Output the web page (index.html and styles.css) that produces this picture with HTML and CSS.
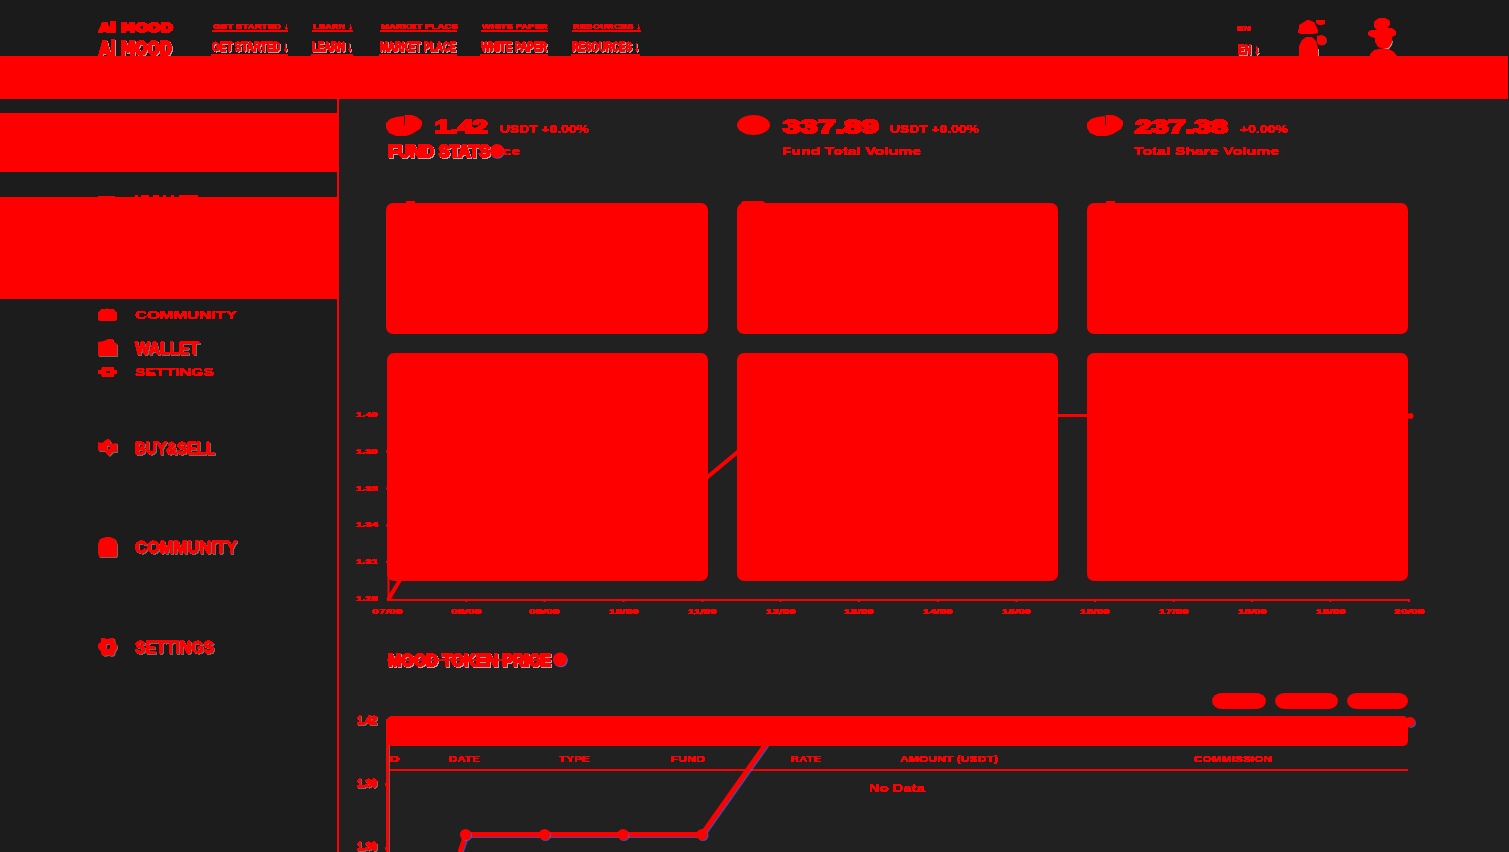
FILE: index.html
```html
<!DOCTYPE html>
<html lang="en">
<head>
<meta charset="utf-8">
<title>Ai MOOD</title>
<link rel="stylesheet" href="styles.css">
</head>
<body>
<svg class="defs" width="0" height="0"><filter id="hard" x="-5%" y="-20%" width="110%" height="140%"><feComponentTransfer><feFuncA type="discrete" tableValues="0 0 1 1 1 1"/></feComponentTransfer></filter></svg>
<div class="page">
  <header class="header">
    <div class="nav nav-small">
      <svg class="logo" width="76" height="12"><text class="brand" x="1" y="11" font-size="12" textLength="74" lengthAdjust="spacingAndGlyphs">Ai MOOD</text></svg>
      <svg class="link" width="76" height="10"><text x="1" y="9" font-size="7.500" textLength="76" lengthAdjust="spacingAndGlyphs">GET STARTED ↓</text></svg>
      <svg class="link" width="41" height="10"><text x="1" y="9" font-size="7.500" textLength="40" lengthAdjust="spacingAndGlyphs">LEARN ↓</text></svg>
      <svg class="link" width="77" height="10"><text x="1" y="9" font-size="7.500" textLength="77" lengthAdjust="spacingAndGlyphs">MARKET PLACE</text></svg>
      <svg class="link" width="67" height="10"><text x="1" y="9" font-size="7.500" textLength="66" lengthAdjust="spacingAndGlyphs">WHITE PAPER</text></svg>
      <svg class="link" width="69" height="10"><text x="1" y="9" font-size="7.500" textLength="68" lengthAdjust="spacingAndGlyphs">RESOURCES ↓</text></svg>
      <svg class="lang" width="24" height="12"><text x="0" y="11" font-size="6.500" textLength="14" lengthAdjust="spacingAndGlyphs">EN</text></svg>
    </div>
    <div class="nav nav-large">
      <svg class="logo lit" width="76" height="18"><text class="brand" x="1" y="17" font-size="19" textLength="73" lengthAdjust="spacingAndGlyphs">Ai MOOD</text></svg>
      <svg class="link" width="77" height="15"><g class="lit"><text class="bold" x="1" y="12" font-size="12.500" textLength="76" lengthAdjust="spacingAndGlyphs">GET STARTED ↓</text></g></svg>
      <svg class="link" width="42" height="15"><g class="lit"><text class="bold" x="1" y="12" font-size="12.500" textLength="40" lengthAdjust="spacingAndGlyphs">LEARN ↓</text></g></svg>
      <svg class="link" width="78" height="15"><g class="lit"><text class="bold" x="1" y="12" font-size="12.500" textLength="76" lengthAdjust="spacingAndGlyphs">MARKET PLACE</text></g></svg>
      <svg class="link" width="68" height="15"><g class="lit"><text class="bold" x="1" y="12" font-size="12.500" textLength="66" lengthAdjust="spacingAndGlyphs">WHITE PAPER</text></g></svg>
      <svg class="link" width="69" height="15"><g class="lit"><text class="bold" x="1" y="12" font-size="12.500" textLength="67" lengthAdjust="spacingAndGlyphs">RESOURCES ↓</text></g></svg>
      <svg class="lang lit" width="24" height="18"><text class="bold" x="1" y="16" font-size="12" textLength="21" lengthAdjust="spacingAndGlyphs">EN ↓</text></svg>
    </div>
    <svg class="people" width="104" height="40" viewBox="1296 16 104 40">
      <path class="lit" d="M1310 48h8v8h-8zM1389 39l3 1-1 4-3 4h-6z"/>
      <circle class="faint" cx="1322" cy="40.500" r="5"/>
      <path d="M1298 33v-3l1-1v-4l5-3 3-2h2l5 2 2 4 2 4v3l-5 1h-12zM1316 20h9v4l-3 1h-3l-3-2zM1299 56v-10l3-6 4-3h6l4 4 2 7v8zM1317 36l4-1 4 2 1 4-3 4h-4l-2-3z"/>
      <path d="M1374 22l2-2 3-2h6l4 2 1 2v3l-3 3h5l4 3v4l-4 2v5l-3 5-5 2-6-2-3-5v-4l-4-1-3-2v-3l3-2h6l-3-3zM1370 56v-2l4-4 5-1h10l5 3 3 4z"/>
    </svg>
    <div class="banner"></div>
  </header>

  <div class="body">
    <aside class="sidebar">
      <div class="band band-short"></div>
      <div class="peek"><i class="peek-icon"></i><svg width="64" height="2"><path d="M0 0h3v2H0zM6 0h8v2H6zM18 0h6v2h-6zM28 0h3v2h-3zM36 0h3v2h-3zM44 0h19v2H44z"/></svg></div>
      <div class="band band-tall"></div>
      <div class="item item-community"><svg width="20" height="14"><path d="M0 12V4l2-1 1-2h5l1-1 1 1h6l1 2 2 1v8l-2 1H2z"/></svg><svg width="103" height="12"><text class="wide" x="0" y="10" font-size="10.500" textLength="102" lengthAdjust="spacingAndGlyphs">COMMUNITY</text></svg></div>
      <div class="item item-wallet"><svg class="dim" width="20" height="18"><path d="M0 17V3l6-1 4-2h5v2l4 3v12z"/></svg><svg class="dim" width="66" height="16"><text class="bold" x="0" y="13.500" font-size="16" textLength="64" lengthAdjust="spacingAndGlyphs">WALLET</text></svg></div>
      <div class="item item-small"><svg width="20" height="12"><path fill-rule="evenodd" d="M0 4h3l1-3h12v3h3v4h-3v3H4L3 8H0zM8 5v2h4V5z"/></svg><svg width="80" height="12"><text class="wide" x="0" y="10" font-size="10.500" textLength="79" lengthAdjust="spacingAndGlyphs">SETTINGS</text></svg></div>
      <div class="item item-tall"><svg class="dim" width="20" height="20"><path fill-rule="evenodd" d="M0 4l4 1 5-4h2l2 3-1 2 7-1v9h-4l-4 4-4-4 1-1H1L0 12zM9 8v3h3V8z"/></svg><svg class="dim" width="83" height="17"><text class="bold" x="0" y="14" font-size="17" textLength="80" lengthAdjust="spacingAndGlyphs">BUY&amp;SELL</text></svg></div>
      <div class="item item-mid"><svg class="dim" width="20" height="21"><path d="M1 20L0 16V7l2-5 6-2h4l5 2 2 5v11l-1 2z"/></svg><svg class="dim" width="104" height="17"><text class="bold" x="0" y="14" font-size="17" textLength="102" lengthAdjust="spacingAndGlyphs">COMMUNITY</text></svg></div>
      <div class="item item-tall"><svg class="dim" width="20" height="20"><path fill-rule="evenodd" d="M3 1l4 0 1 1h3l1-1h4l1 5 2 2v3l-2 3-1 4-3 1-3-1-4 1-3-2v-3l-3-3V7l3-2zM8 8v3l1 1h2l1-1V8l-1-1H9z"/></svg><svg class="dim" width="81" height="17"><text class="bold" x="0" y="14" font-size="17" textLength="79" lengthAdjust="spacingAndGlyphs">SETTINGS</text></svg></div>
    </aside>

    <main class="main">
      <section class="stats">
        <div class="stat">
          <svg class="pie pie-left" width="37" height="21"><path d="M18 1H19V0H26L31 2L36 6V10L34 14L26 19L20 21H10L3 18L0 13V8L4 4L10 2L18 1V10H19V0z"/></svg>
          <svg class="figures" width="165" height="22"><text class="heavy" x="2" y="17.500" font-size="18" textLength="53" lengthAdjust="spacingAndGlyphs">1.42</text><text class="wide" x="67" y="17.500" font-size="10" textLength="89" lengthAdjust="spacingAndGlyphs">USDT +0.00%</text></svg>
          <svg class="heading" width="133" height="18"><g class="lit"><text class="heavy" x="2" y="14" font-size="17" textLength="102" lengthAdjust="spacingAndGlyphs">FUND STATS</text></g><circle class="blue" cx="111.500" cy="8.700" r="7"/><circle cx="111" cy="8" r="7"/><text class="wide" x="117" y="12" font-size="10" textLength="17" lengthAdjust="spacingAndGlyphs">ce</text></svg>
        </div>
        <div class="stat">
          <svg class="pie" width="37" height="21"><ellipse cx="16.500" cy="10" rx="16.500" ry="10"/></svg>
          <svg class="figures" width="210" height="22"><text class="heavy" x="0" y="17.500" font-size="18" textLength="96" lengthAdjust="spacingAndGlyphs">337.89</text><text class="wide" x="107" y="17.500" font-size="10" textLength="89" lengthAdjust="spacingAndGlyphs">USDT +0.00%</text></svg>
          <svg class="caption" width="142" height="14"><text class="wide" x="0" y="11" font-size="11" textLength="139" lengthAdjust="spacingAndGlyphs">Fund Total Volume</text></svg>
        </div>
        <div class="stat">
          <svg class="pie" width="37" height="21"><path d="M18 1H19V0H26L31 2L36 6V10L34 14L26 19L20 21H10L3 18L0 13V8L4 4L10 2L18 1V10H19V0z"/></svg>
          <svg class="figures" width="160" height="22"><text class="heavy" x="2" y="17.500" font-size="18" textLength="93" lengthAdjust="spacingAndGlyphs">237.38</text><text class="wide" x="107" y="17.500" font-size="10" textLength="48" lengthAdjust="spacingAndGlyphs">+0.00%</text></svg>
          <svg class="caption" width="149" height="14"><text class="wide" x="2" y="11" font-size="11" textLength="145" lengthAdjust="spacingAndGlyphs">Total Share Volume</text></svg>
        </div>
      </section>
      <div class="bumps"><i class="bump"></i><i class="bump bump-wide"></i><i class="bump"></i></div>
      <section class="cards">
        <div class="card card-first"></div><div class="card"></div><div class="card"></div>
        <div class="card"></div><div class="card"></div><div class="card"></div>
      </section>
      <svg class="token-title" width="184" height="18"><g class="lit"><text class="heavy" x="1" y="14" font-size="16.500" textLength="163" lengthAdjust="spacingAndGlyphs">MOOD TOKEN PRICE</text></g><path d="M0 7h162v2H0z"/><circle class="blue" cx="173.700" cy="8.200" r="7"/><circle cx="173" cy="7.500" r="7"/></svg>
      <div class="pills"><i class="pill pill-a"></i><i class="pill pill-b"></i><i class="pill pill-c"></i></div>
      <div class="bar"></div>
      <div class="thead">
        <svg width="61" height="12"><text class="wide" x="1" y="10" font-size="9.200" textLength="11" lengthAdjust="spacingAndGlyphs">D</text></svg>
        <svg width="110" height="12"><text class="wide" x="0" y="10" font-size="9.200" textLength="31" lengthAdjust="spacingAndGlyphs">DATE</text></svg>
        <svg width="112" height="12"><text class="wide" x="0" y="10" font-size="9.200" textLength="31" lengthAdjust="spacingAndGlyphs">TYPE</text></svg>
        <svg width="120" height="12"><text class="wide" x="0" y="10" font-size="9.200" textLength="34" lengthAdjust="spacingAndGlyphs">FUND</text></svg>
        <svg width="109" height="12"><text class="wide" x="0" y="10" font-size="9.200" textLength="30" lengthAdjust="spacingAndGlyphs">RATE</text></svg>
        <svg width="294" height="12"><text class="wide" x="0" y="10" font-size="9.200" textLength="98" lengthAdjust="spacingAndGlyphs">AMOUNT (USDT)</text></svg>
        <svg width="80" height="12"><text class="wide" x="0" y="10" font-size="9.200" textLength="78" lengthAdjust="spacingAndGlyphs">COMMISSION</text></svg>
      </div>
      <div class="empty"><svg width="58" height="12"><text class="wide" x="0" y="10.500" font-size="10" textLength="56" lengthAdjust="spacingAndGlyphs">No Data</text></svg></div>

      <svg class="charts" width="1170" height="753" viewBox="339 99 1170 753">
        <g class="axis"><path d="M388.500 574v26M387 600h1023"/><path d="M386 451.500h3M386 488.500h3M386 525.500h3M386 562h3M466.500 600v2M544.500 600v2M623.500 600v2M702.500 600v2M780.500 600v2M859 600v2M938 600v2M1016.500 600v2M1095 600v2M1173.500 600v2M1252 600v2M1330.500 600v2M1409 600v2"/></g>
        <path class="curve" d="M388 600l15-25M704 480l36-30"/>
        <path class="curve curve-thin" d="M1056 415.500h34"/>
        <circle cx="1410.500" cy="416" r="3"/>
        <g class="tick">
          <text x="356" y="417" textLength="22" lengthAdjust="spacingAndGlyphs">1.40</text>
          <text x="356" y="454" textLength="22" lengthAdjust="spacingAndGlyphs">1.30</text>
          <text x="356" y="491" textLength="22" lengthAdjust="spacingAndGlyphs">1.35</text>
          <text x="356" y="527" textLength="22" lengthAdjust="spacingAndGlyphs">1.34</text>
          <text x="356" y="564" textLength="22" lengthAdjust="spacingAndGlyphs">1.31</text>
          <text x="356" y="601" textLength="22" lengthAdjust="spacingAndGlyphs">1.28</text>
          <text x="372" y="613.500" textLength="31" lengthAdjust="spacingAndGlyphs">07/09</text>
          <text x="451" y="613.500" textLength="31" lengthAdjust="spacingAndGlyphs">08/09</text>
          <text x="529" y="613.500" textLength="31" lengthAdjust="spacingAndGlyphs">09/09</text>
          <text x="609" y="613.500" textLength="30" lengthAdjust="spacingAndGlyphs">10/09</text>
          <text x="688" y="613.500" textLength="29" lengthAdjust="spacingAndGlyphs">11/09</text>
          <text x="766" y="613.500" textLength="30" lengthAdjust="spacingAndGlyphs">12/09</text>
          <text x="844" y="613.500" textLength="30" lengthAdjust="spacingAndGlyphs">13/09</text>
          <text x="923" y="613.500" textLength="30" lengthAdjust="spacingAndGlyphs">14/09</text>
          <text x="1002" y="613.500" textLength="29" lengthAdjust="spacingAndGlyphs">15/09</text>
          <text x="1080" y="613.500" textLength="30" lengthAdjust="spacingAndGlyphs">16/09</text>
          <text x="1159" y="613.500" textLength="30" lengthAdjust="spacingAndGlyphs">17/09</text>
          <text x="1238" y="613.500" textLength="29" lengthAdjust="spacingAndGlyphs">18/09</text>
          <text x="1316" y="613.500" textLength="30" lengthAdjust="spacingAndGlyphs">19/09</text>
          <text x="1394" y="613.500" textLength="31" lengthAdjust="spacingAndGlyphs">20/09</text>
        </g>
        <path class="edge" d="M389.500 745v107"/>
        <path class="axis-bold" d="M387.500 719v133M385 784.500h4M385 848.500h4"/>
        <g class="shade"><path class="curve-bold" d="M460 852l6-17.500h236l64-90.500"/></g>
        <g class="shade"><circle cx="465.500" cy="834.500" r="5.500"/><circle cx="544.500" cy="834.500" r="5.500"/><circle cx="623" cy="834.500" r="5.500"/><circle cx="702" cy="834.500" r="5.500"/><circle cx="1410" cy="722" r="5"/></g>
        <g class="tick dim tick-large">
          <text x="357" y="723.500" textLength="20" lengthAdjust="spacingAndGlyphs">1.42</text>
          <text x="357" y="787" textLength="20" lengthAdjust="spacingAndGlyphs">1.39</text>
          <text x="357" y="850" textLength="20" lengthAdjust="spacingAndGlyphs">1.36</text>
        </g>
      </svg>
    </main>
  </div>
</div>
</body>
</html>
```
FILE: styles.css
```css
* { box-sizing: border-box; }
body { margin: 0; background: #212121; font-family: "Liberation Sans", sans-serif; }
.page { width: 1509px; height: 852px; overflow: hidden; display: flex; flex-direction: column; }
svg { display: block; fill: #f00; flex: none; overflow: visible; }
.defs { position: absolute; }
svg text { font-family: "Liberation Sans", sans-serif; font-weight: 700; fill: #f00; stroke: #f00; stroke-width: .6px; filter: url(#hard); }
svg text.wide { stroke-width: .4px; }
svg text.bold { stroke-width: 1px; }
svg text.heavy { stroke-width: 1.8px; }
svg text.brand { font-family: "DejaVu Sans", sans-serif; stroke-width: 1.8px; }
i { display: block; }
.lit { filter: drop-shadow(1px 1px 0 rgba(255, 255, 255, .6)); }
.dim { filter: drop-shadow(1px 1px 0 rgba(160, 160, 160, .6)); }
.faint { fill: #933; }

.header { position: relative; height: 99px; flex: none; background: #1b1b1b; }
.nav { display: grid; grid-template-columns: 114px 100px 68px 101px 91px 665px 24px; padding-left: 98px; align-items: end; }
.nav-small { height: 32px; }
.nav-small .logo { margin-bottom: -1px; }
.nav-large { height: 24px; }
.nav-large .link { margin-left: -1px; }
.link { box-sizing: content-box; border-bottom: 2px solid #f00; }
.people { position: absolute; left: 1296px; top: 16px; }
.banner { position: relative; width: 1508px; height: 42.5px; background: #f00; }

.body { flex: 1; display: flex; min-height: 0; }
.sidebar { width: 339px; background: #1c1c1c; border-right: 2px solid #f00; padding-top: 14px; }
.band { background: #f00; width: 338px; }
.band-short { height: 59px; }
.band-tall { height: 102px; margin-bottom: -1px; }
.peek { height: 25px; padding-left: 98px; display: flex; align-items: flex-end; gap: 20px; }
.peek-icon { width: 17px; height: 1.5px; background: #f00; }
.item { display: flex; align-items: center; padding-left: 98px; gap: 17px; }
.item-community { height: 34px; }
.item-wallet { height: 32px; }
.item-small { height: 16px; }
.item-tall { height: 136px; }
.item-mid { height: 63px; }

.main { position: relative; flex: 1; padding: 16px 101px 0 48px; background: #212121; }
.stats { display: grid; grid-template-columns: 350px 350px 321px; height: 86px; }
.stat { display: grid; grid-template-columns: 37px 1fr; column-gap: 9px; grid-template-rows: 28px 20px; align-items: start; }
.pie-left { margin-left: -1px; }
.heading { grid-column: 1 / 3; margin-left: -1px; }
.caption { grid-column: 2; margin-top: 1px; margin-left: -1px; }
.bumps { display: grid; grid-template-columns: 350px 350px 321px; height: 2px; }
.bump { width: 9px; height: 3px; margin-left: 19px; background: #f00; }
.bump-wide { width: 24px; margin-left: 4px; border-radius: 5px 5px 0 0; }
.cards { display: grid; grid-template-columns: repeat(3, 321px); grid-template-rows: 131px 228px; column-gap: 29px; row-gap: 19px; }
.card { background: #f00; border-radius: 7px; }
.card-first { margin-left: -1px; }
.token-title { margin-top: 71px; }
.pills { display: flex; justify-content: flex-end; gap: 9px; height: 16px; margin-top: 23px; }
.pill { background: #f00; border-radius: 10px / 8px; height: 16px; }
.pill-a { width: 54px; }
.pill-b { width: 63px; }
.pill-c { width: 61px; }
.bar { height: 30px; margin-top: 7px; background: #f00; border-radius: 5px; }
.thead { display: flex; padding-top: 6px; padding-left: 1px; height: 25px; border-bottom: 2px solid #f00; }
.empty { display: flex; justify-content: center; padding: 10px 0 0 0; }

.charts { position: absolute; left: 0; top: 0; }
.axis { fill: none; stroke: #f00; stroke-width: 2px; }
.axis-bold { fill: none; stroke: #f00; stroke-width: 3px; }
.edge { stroke: #666; stroke-width: 1px; }
.curve { fill: none; stroke: #f00; stroke-width: 4px; }
.curve-thin { stroke-width: 3px; }
.curve-bold { fill: none; stroke: #f00; stroke-width: 5px; }
.tick text { font-size: 7.5px; }
.tick-large text { font-size: 10.5px; stroke-width: 1px; }
.shade { filter: drop-shadow(1px 1px 0 rgba(65, 105, 225, .7)); }
.blue { fill: #4169e1; }
```
